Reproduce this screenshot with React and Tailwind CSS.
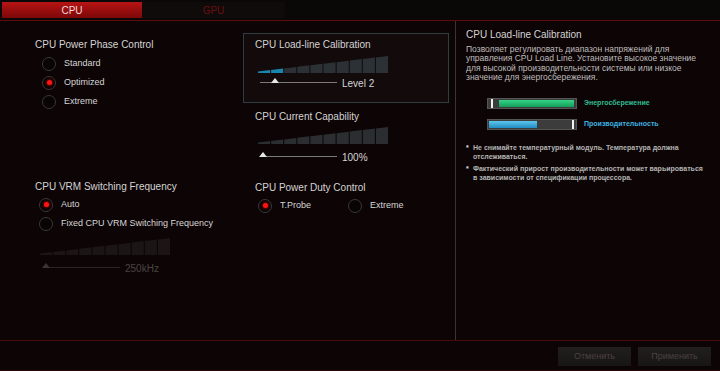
import React from "react";

const font = { fontFamily: '"Liberation Sans", Arial, sans-serif' };

function Radio({ checked, label }) {
    return (
        <div className="flex items-center h-[19px]">
            <div className="w-[14px] h-[14px] rounded-full border border-[#3a3838] bg-[#090404] flex items-center justify-center">
                {checked && (
                    <div className="w-[5px] h-[5px] rounded-full bg-[#ff1414] shadow-[0_0_3px_#ff0000]" />
                )}
            </div>
            <span className="ml-[8px] text-[9px] text-[#d6d6d6]">{label}</span>
        </div>
    );
}

function Wedge({ color, active = 0, activeColor = "#1a86ad" }) {
    const w = 130;
    const h = 17;
    const n = 10;
    const seg = (w - (n - 1)) / n;
    const top = (x) => h - (1.5 + ((h - 1.5) * x) / w);
    const bars = [];
    for (let i = 0; i < n; i++) {
        const x0 = i * (seg + 1);
        const x1 = x0 + seg;
        bars.push(
            <polygon
                key={i}
                points={`${x0},${top(x0)} ${x1},${top(x1)} ${x1},${h} ${x0},${h}`}
                fill={i < active ? activeColor : color}
            />
        );
    }
    return (
        <svg width={w} height={h} viewBox={`0 0 ${w} ${h}`} className="block">
            {bars}
        </svg>
    );
}

function Slider({ pos, value, dim }) {
    return (
        <div className="flex items-center h-[10px]">
            <div className="relative w-[77px] h-[10px]">
                <div
                    className={`absolute left-0 right-0 top-[4px] h-px ${
                        dim ? "bg-[#2a2424]" : "bg-[#7a7a7a]"
                    }`}
                />
                <svg
                    width="8"
                    height="5"
                    viewBox="0 0 8 5"
                    className="absolute top-[0px]"
                    style={{ left: pos }}
                >
                    <polygon points="4,0 8,5 0,5" fill={dim ? "#3a3434" : "#e6e6e6"} />
                </svg>
            </div>
            <span className={`ml-[5px] text-[10px] ${dim ? "text-[#4a4444]" : "text-[#d6d6d6]"}`}>
                {value}
            </span>
        </div>
    );
}

function Heading({ children }) {
    return <div className="text-[10px] leading-[12px] text-[#d4d4d4]">{children}</div>;
}

export default function App() {
    return (
        <div className="w-[720px] h-[371px] flex flex-col bg-[#0d0405] overflow-hidden" style={font}>
            {/* Tabs */}
            <div className="h-[21px] flex pl-[2px] pt-[2px] bg-[#0a0707] border-b border-[#5e0c0c]">
                <div className="w-[140px] h-[16px] flex items-center justify-center bg-gradient-to-b from-[#b81414] to-[#7c0808] text-[10px] text-[#ecdcdc]">
                    CPU
                </div>
                <div className="w-[143px] h-[16px] flex items-center justify-center bg-[#100b0b] text-[10px] text-[#6c0e0e]">
                    GPU
                </div>
            </div>

            {/* Main */}
            <div className="flex-1 flex border-b border-[#4e0909]">
                {/* Left column */}
                <div className="w-[240px] pl-[35px] pt-[18px] flex flex-col">
                    <Heading>CPU Power Phase Control</Heading>
                    <div className="mt-[3px] pl-[7px] flex flex-col">
                        <Radio label="Standard" />
                        <Radio checked label="Optimized" />
                        <Radio label="Extreme" />
                    </div>

                    <div className="mt-[70px]">
                        <Heading>CPU VRM Switching Frequency</Heading>
                    </div>
                    <div className="mt-[2px] pl-[4px] flex flex-col">
                        <Radio checked label="Auto" />
                        <Radio label="Fixed CPU VRM Switching Frequency" />
                    </div>
                    <div className="mt-[5px] pl-[5px]">
                        <Wedge color="#1b1515" />
                        <div className="mt-[8px] pl-[3px]">
                            <Slider pos={-1} value="250kHz" dim />
                        </div>
                    </div>
                </div>

                {/* Middle column */}
                <div className="w-[215px] pl-[3px] pt-[12px] flex flex-col">
                    <div className="w-[206px] h-[70px] border border-[#2f3d41] bg-[#120a0b] pl-[11px] pt-[5px]">
                        <Heading>CPU Load-line Calibration</Heading>
                        <div className="mt-[5px] pl-[3px]">
                            <Wedge color="#2c3135" active={2} />
                        </div>
                        <div className="mt-[5px] pl-[5px]">
                            <Slider pos={11} value="Level 2" />
                        </div>
                    </div>
                    <div className="pl-[12px] mt-[8px]">
                        <Heading>CPU Current Capability</Heading>
                        <div className="mt-[4px] pl-[3px]">
                            <Wedge color="#2a2e31" />
                        </div>
                        <div className="mt-[8px] pl-[5px]">
                            <Slider pos={-1} value="100%" />
                        </div>
                    </div>
                    <div className="pl-[12px] mt-[20px]">
                        <Heading>CPU Power Duty Control</Heading>
                        <div className="mt-[2px] pl-[3px] flex">
                            <div className="w-[90px]">
                                <Radio checked label="T.Probe" />
                            </div>
                            <Radio label="Extreme" />
                        </div>
                    </div>
                </div>

                {/* Right panel */}
                <div className="flex-1 border-l border-[#3a3434] pl-[10px] pt-[8px] pr-[4px]">
                    <Heading>CPU Load-line Calibration</Heading>
                    <p className="mt-[4px] pr-[16px] text-[8.5px] leading-[9.3px] text-[#bdbdbd]">
                        Позволяет регулировать диапазон напряжений для управления CPU Load Line. Установите высокое значение для высокой производительности системы или низкое значение для энергосбережения.
                    </p>
                    <div className="mt-[16px] pl-[21px] flex flex-col gap-[10px]">
                        <div className="flex items-center">
                            <div className="w-[90px] h-[11px] bg-[#3c3c3c] border border-[#555] flex items-center pl-[3px]">
                                <div className="w-[2px] h-[9px] bg-[#f2f2f2]" />
                                <div className="ml-[6px] w-[75px] h-[7px] bg-gradient-to-b from-[#33d487] to-[#139c5a]" />
                            </div>
                            <span className="ml-[7px] text-[7px] font-bold text-[#2fbc93]">Энергосбережение</span>
                        </div>
                        <div className="flex items-center">
                            <div className="w-[90px] h-[11px] bg-[#3c3c3c] border border-[#555] flex items-center pl-[1px]">
                                <div className="w-[48px] h-[7px] bg-gradient-to-b from-[#5cc6ee] to-[#1f8cc0]" />
                                <div className="ml-[35px] w-[2px] h-[9px] bg-[#f2f2f2]" />
                            </div>
                            <span className="ml-[7px] text-[7px] font-bold text-[#3eb2e2]">Производительность</span>
                        </div>
                    </div>
                    <div className="mt-[13px] flex flex-col gap-[3px] text-[7px] leading-[9px] font-bold text-[#b4b4b4]">
                        <div className="flex">
                            <span className="w-[7px] shrink-0 text-[#e0e0e0]">*</span>
                            <span>
                                Не снимайте температурный модуль. Температура должна
                                <br />
                                отслеживаться.
                            </span>
                        </div>
                        <div className="flex">
                            <span className="w-[7px] shrink-0 text-[#e0e0e0]">*</span>
                            <span>
                                Фактический прирост производительности может варьироваться
                                <br />
                                в зависимости от спецификации процессора.
                            </span>
                        </div>
                    </div>
                </div>
            </div>

            {/* Footer */}
            <div className="h-[30px] flex justify-end items-start pt-[6px] pr-[9px] gap-[7px] border-b border-[#2a0606]">
                <div className="w-[73px] h-[19px] flex items-center justify-center bg-gradient-to-b from-[#211e1e] to-[#181515] text-[9px] text-[#4a4343]">
                    Отменить
                </div>
                <div className="w-[73px] h-[19px] flex items-center justify-center bg-gradient-to-b from-[#211e1e] to-[#181515] text-[9px] text-[#4a4343]">
                    Применить
                </div>
            </div>
        </div>
    );
}
